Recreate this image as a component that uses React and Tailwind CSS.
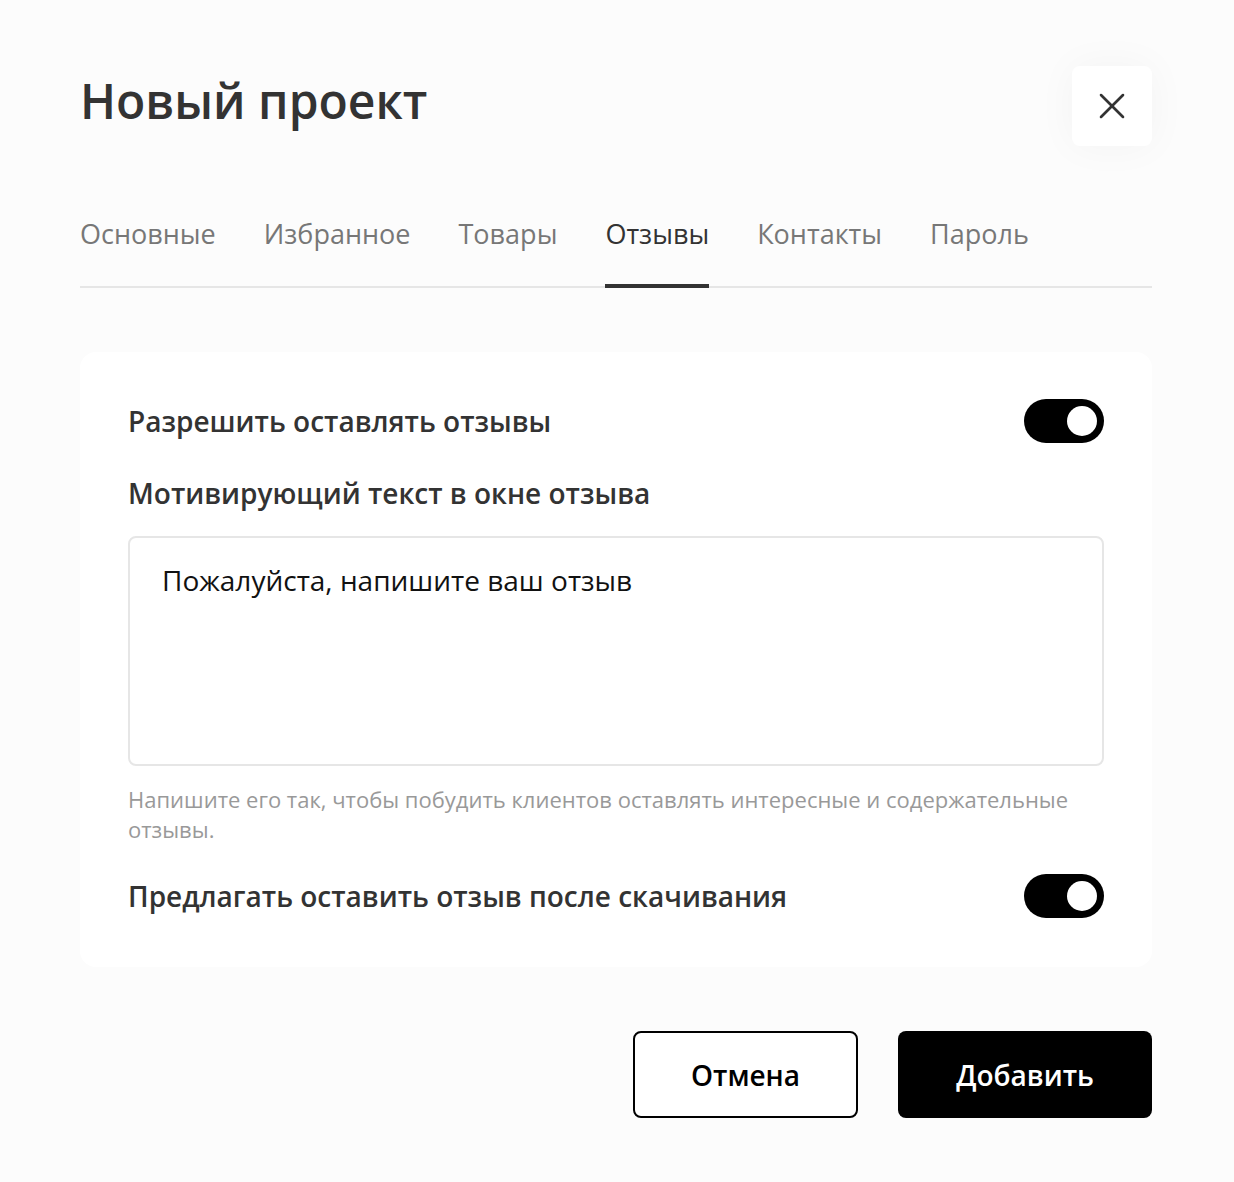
import { useState } from 'react'
import { X } from 'lucide-react'

const tabs = ['Основные', 'Избранное', 'Товары', 'Отзывы', 'Контакты', 'Пароль']

function Toggle({ on, onChange }) {
  return (
    <button
      onClick={() => onChange(!on)}
      className={`relative shrink-0 w-[80px] h-[44px] rounded-full ${on ? 'bg-black' : 'bg-[#d4d4d4]'}`}
    >
      <span
        className={`absolute top-[7px] w-[30px] h-[30px] rounded-full bg-white ${on ? 'left-[43px]' : 'left-[7px]'}`}
      />
    </button>
  )
}

export default function App() {
  const [active, setActive] = useState('Отзывы')
  const [allow, setAllow] = useState(true)
  const [offer, setOffer] = useState(true)
  const [text, setText] = useState('Пожалуйста, напишите ваш отзыв')

  return (
    <div className="min-h-[1182px] bg-[#fcfcfc] pl-[80px] pr-[82px] pt-[66px] pb-[64px] text-[#333]" style={{ fontFamily: '"Open Sans", "Noto Sans", sans-serif' }}>
      <div className="flex items-center justify-between">
        <h1 className="text-[48px] leading-[70px] font-semibold text-[#333] -mt-[10px]">Новый проект</h1>
        <button className="w-[80px] h-[80px] rounded-[8px] bg-white flex items-center justify-center shadow-[0_0_40px_rgba(0,0,0,0.04)] text-[#333]">
          <X size={44} strokeWidth={1.4} />
        </button>
      </div>

      <div className="mt-[70px] flex gap-[48px] border-b-2 border-[#e6e6e6]">
        {tabs.map(t => (
          <button
            key={t}
            onClick={() => setActive(t)}
            className={`-mb-[2px] pb-[32px] text-[27px] leading-[36px] font-medium border-b-4 ${active === t ? 'text-[#333] border-[#333]' : 'text-[#777] border-transparent'}`}
          >
            {t}
          </button>
        ))}
      </div>

      <div className="mt-[64px] bg-white rounded-[16px] px-[48px] pt-[47px] pb-[49px]">
        <div className="flex items-center justify-between">
          <span className="text-[28px] leading-[36px] font-semibold">Разрешить оставлять отзывы</span>
          <Toggle on={allow} onChange={setAllow} />
        </div>
        <div className="mt-[32px] text-[28px] leading-[36px] font-semibold">Мотивирующий текст в окне отзыва</div>
        <textarea
          value={text}
          onChange={e => setText(e.target.value)}
          className="mt-[25px] block w-full h-[230px] resize-none rounded-[8px] border-2 border-[#e6e6e6] px-[32px] py-[24px] text-[28px] leading-[36px] text-[#111] outline-none"
        />
        <p className="mt-[18px] text-[22px] leading-[30px] text-[#999]">
          Напишите его так, чтобы побудить клиентов оставлять интересные и содержательные отзывы.
        </p>
        <div className="mt-[30px] flex items-center justify-between">
          <span className="text-[28px] leading-[36px] font-semibold">Предлагать оставить отзыв после скачивания</span>
          <Toggle on={offer} onChange={setOffer} />
        </div>
      </div>

      <div className="mt-[64px] flex justify-end gap-[40px]">
        <button className="w-[225px] h-[87px] rounded-[8px] border-2 border-black bg-white text-[28px] font-semibold text-black">Отмена</button>
        <button className="w-[254px] h-[87px] rounded-[8px] bg-black text-[28px] font-semibold text-white">Добавить</button>
      </div>
    </div>
  )
}
